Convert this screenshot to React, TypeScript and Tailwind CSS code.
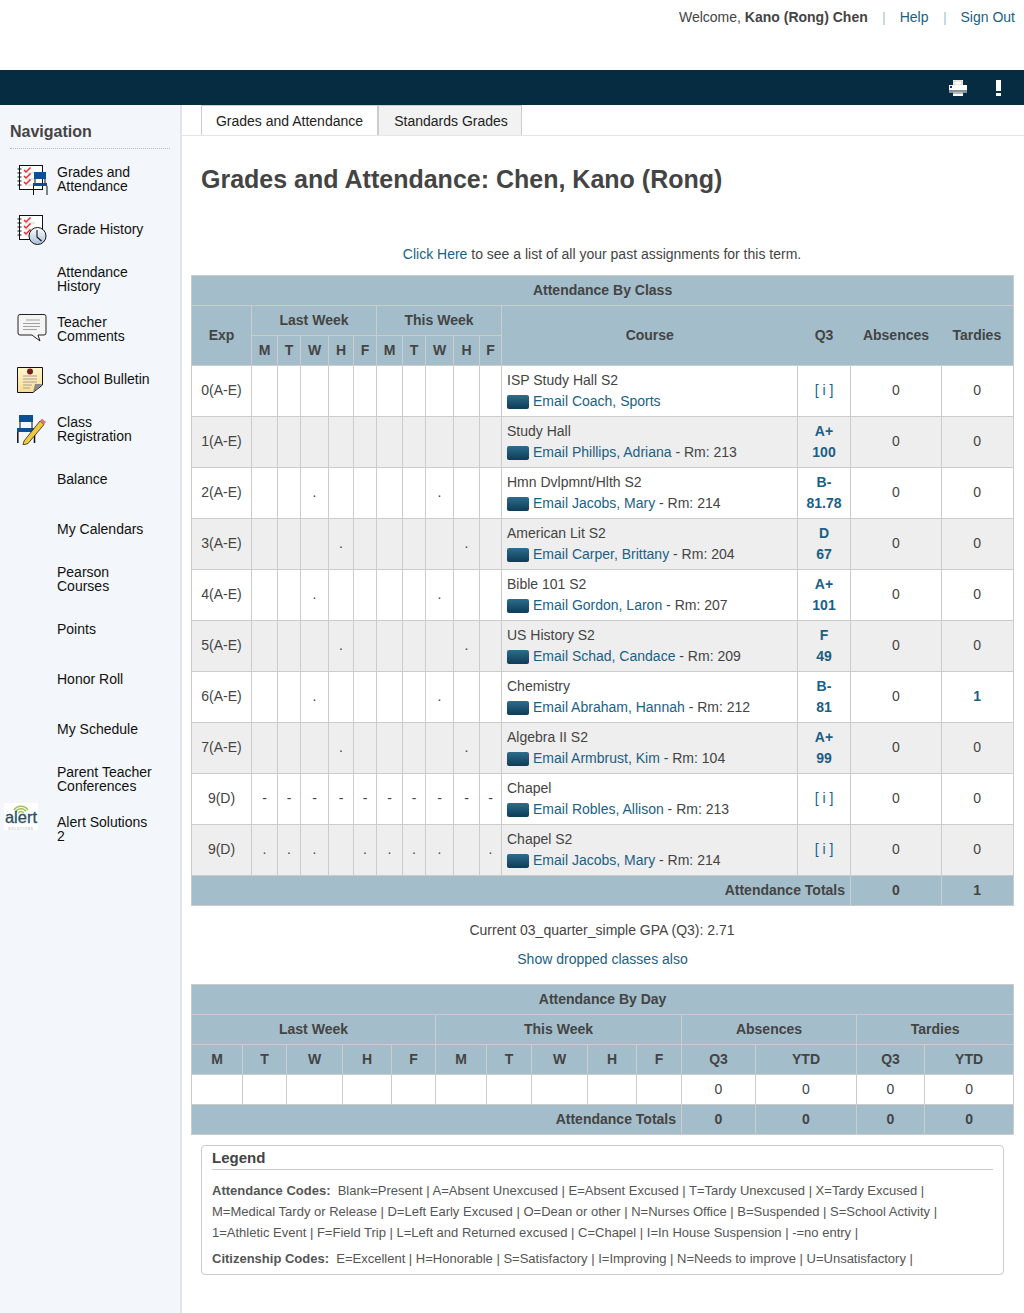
import React from "react";

const Notebook = ({ children }: { children?: React.ReactNode }) => (
  <svg width="32" height="33" viewBox="0 0 32 33" className="block">
    <rect x="2.500" y="2.500" width="23" height="24" fill="#fff" stroke="#111" />
    {[6, 10, 14, 18, 22].map((y) => (
      <path key={y} d={`M0.500 ${y}H4.500`} stroke="#111" />
    ))}
    {[6, 12, 18].map((y) => (
      <g key={y}>
        <path d={`M7 ${y + 1}l2 2 4.500-4.500`} fill="none" stroke="#ea2a2a" strokeWidth="1.500" />
        <path d={`M8 ${y + 4}h10`} stroke="#bbb" strokeWidth="0.700" />
      </g>
    ))}
    {children}
  </svg>
);

const IconGrades = () => (
  <Notebook>
    <rect x="17" y="9" width="12" height="7" fill="#0d4f97" />
    <rect x="16" y="20" width="14" height="3" fill="#0d4f97" />
    <path d="M16.500 23v9M30 23v9M18 16v4M28 16v4" stroke="#111" fill="none" />
  </Notebook>
);
const IconHistory = () => (
  <Notebook>
    <defs>
      <linearGradient id="clk" x1="0" x2="0" y1="0" y2="1">
        <stop offset="0" stopColor="#fff" />
        <stop offset="1" stopColor="#a8c0d8" />
      </linearGradient>
    </defs>
    <circle cx="20.500" cy="23" r="8.500" fill="url(#clk)" stroke="#111" />
    <path d="M20 17v7l4.500 4" fill="none" stroke="#111" strokeWidth="1.100" />
  </Notebook>
);
const IconComments = () => (
  <svg width="32" height="32" viewBox="0 0 32 32" className="block">
    <path d="M3 1.500H27a2 2 0 0 1 2 2V20a2 2 0 0 1-2 2H21l2 6-8-6H3a2 2 0 0 1-2-2V3.500a2 2 0 0 1 2-2Z" fill="#f4f4f4" stroke="#222" />
    <path d="M9 7h14M6 10.500h17M6 13.500h17M6 16.500h14" stroke="#999" strokeWidth="0.900" />
  </svg>
);
const IconBulletin = () => (
  <svg width="32" height="32" viewBox="0 0 32 32" className="block">
    <defs>
      <linearGradient id="pp" x1="0" x2="0" y1="0" y2="1">
        <stop offset="0" stopColor="#fff6cf" />
        <stop offset="1" stopColor="#fbdc8e" />
      </linearGradient>
    </defs>
    <g transform="translate(0,1)">
      <path d="M0.500 3.500H25.500V21L16 28.500H0.500Z" fill="url(#pp)" stroke="#111" />
      <path d="M16 28.500L18 20H25.500Z" fill="#888" />
      <path d="M6 12h14M6 15h14M6 18h14M6 21h9M6 24h7" stroke="#999" strokeWidth="0.900" />
      <circle cx="13" cy="7.500" r="3" fill="#7a1a1a" />
    </g>
  </svg>
);
const IconRegistration = () => (
  <svg width="32" height="32" viewBox="0 0 32 32" className="block">
    <g transform="translate(0,2)">
      <rect x="2" y="0" width="14" height="7" fill="#0d4f97" />
      <rect x="0" y="13" width="18" height="4" fill="#0d4f97" />
      <path d="M3 7v6M15 7v6" stroke="#111" />
      <path d="M0.800 17v11M17.500 17v11" stroke="#111" strokeWidth="1.500" />
      <path d="M7 26l16-20 4 3.500-16 19-5 1.500Z" fill="#f2c83c" stroke="#222" strokeWidth="0.800" />
      <path d="M23 6l2-2.500 4 3.500-2 2.500Z" fill="#d9777a" />
    </g>
  </svg>
);
const IconAlert = () => (
  <svg width="34" height="27" viewBox="0 0 34 27" className="block">
    <rect width="34" height="27" fill="#fff" />
    <g fill="none" stroke="#a3bf58" strokeWidth="1.400">
      <path d="M10 7a8.500 8.500 0 0 1 14 0" />
      <path d="M12 8.500a6 6 0 0 1 10 0" />
      <path d="M14.300 10a3.200 3.200 0 0 1 5.400 0" />
    </g>
    <text x="17" y="19.500" textAnchor="middle" fontSize="16.500" stroke="#2c4f63" strokeWidth="0.300" fill="#2c4f63" fontFamily="'Liberation Sans', sans-serif">alert</text>
    <text x="17" y="26.500" textAnchor="middle" fontSize="3" letterSpacing="0.900" fill="#9aa6ad" fontFamily="'Liberation Sans', sans-serif">SOLUTIONS</text>
  </svg>
);
const IconPrinter = () => (
  <svg width="18" height="16" viewBox="0 0 18 16" className="block">
    <rect x="4" y="0" width="10" height="6" fill="#fff" />
    <rect x="5" y="1" width="8" height="4" fill="#fff" stroke="#aaa" strokeWidth="0.600" />
    <path d="M0 5h18v6H0Z" fill="#fff" />
    <rect x="1" y="6" width="2" height="2" fill="#1a1aff" />
    <rect x="0" y="10.500" width="18" height="1" fill="#052c40" />
    <rect x="0" y="11.500" width="18" height="1" fill="#fff" />
    <rect x="4" y="12" width="10" height="2" fill="#bbb" />
    <rect x="4" y="14" width="10" height="2" fill="#fff" />
  </svg>
);
const IconBang = () => (
  <svg width="5" height="16" viewBox="0 0 5 16" className="block">
    <rect x="0" y="0" width="5" height="11" fill="#fff" />
    <rect x="0" y="13" width="5" height="3" fill="#fff" />
  </svg>
);

const nav: [string[], React.ReactNode][] = [
  [["Grades and", "Attendance"], <IconGrades />],
  [["Grade History"], <IconHistory />],
  [["Attendance", "History"], null],
  [["Teacher", "Comments"], <IconComments />],
  [["School Bulletin"], <IconBulletin />],
  [["Class", "Registration"], <IconRegistration />],
  [["Balance"], null],
  [["My Calendars"], null],
  [["Pearson", "Courses"], null],
  [["Points"], null],
  [["Honor Roll"], null],
  [["My Schedule"], null],
  [["Parent Teacher", "Conferences"], null],
  [["Alert Solutions", "2"], null],
];

const th = "border border-[#cccccc] bg-[#a3bdca] text-[#444444] font-bold text-center p-0";
const td = "border border-[#cccccc] text-center p-0";
const days = ["M", "T", "W", "H", "F", "M", "T", "W", "H", "F"];

type Row = { exp: string; marks: string; course: string; teacher: string; room?: string; grade: string[]; tardies?: string };
const rows: Row[] = [
  { exp: "0(A-E)", marks: "          ", course: "ISP Study Hall S2", teacher: "Email Coach, Sports", grade: ["[ i ]"] },
  { exp: "1(A-E)", marks: "          ", course: "Study Hall", teacher: "Email Phillips, Adriana", room: "213", grade: ["A+", "100"] },
  { exp: "2(A-E)", marks: "  .    .  ", course: "Hmn Dvlpmnt/Hlth S2", teacher: "Email Jacobs, Mary", room: "214", grade: ["B-", "81.78"] },
  { exp: "3(A-E)", marks: "   .    . ", course: "American Lit S2", teacher: "Email Carper, Brittany", room: "204", grade: ["D", "67"] },
  { exp: "4(A-E)", marks: "  .    .  ", course: "Bible 101 S2", teacher: "Email Gordon, Laron", room: "207", grade: ["A+", "101"] },
  { exp: "5(A-E)", marks: "   .    . ", course: "US History S2", teacher: "Email Schad, Candace", room: "209", grade: ["F", "49"] },
  { exp: "6(A-E)", marks: "  .    .  ", course: "Chemistry", teacher: "Email Abraham, Hannah", room: "212", grade: ["B-", "81"], tardies: "1" },
  { exp: "7(A-E)", marks: "   .    . ", course: "Algebra II S2", teacher: "Email Armbrust, Kim", room: "104", grade: ["A+", "99"] },
  { exp: "9(D)", marks: "----------", course: "Chapel", teacher: "Email Robles, Allison", room: "213", grade: ["[ i ]"] },
  { exp: "9(D)", marks: "... .... .", course: "Chapel S2", teacher: "Email Jacobs, Mary", room: "214", grade: ["[ i ]"] },
];

const Mail = () => (
  <span className="inline-block align-[-3px] w-[22px] h-[14px] rounded-[2px] mr-[4px] bg-gradient-to-b from-[#2d6d8e] to-[#0d3c56]" />
);

export default function App() {
  return (
    <div className="min-h-[1313px] bg-white font-['Liberation_Sans',Arial,sans-serif] text-[14px] text-[#444444] flex flex-col">
      <header className="h-[70px] flex justify-end items-start pt-[9px] pr-[9px]">
        <span className="leading-[17px]">Welcome, <b>Kano (Rong) Chen</b></span>
        <span className="ml-[15px] mt-[3px] w-[2px] h-[13px] bg-[#c8d8e4]" />
        <a className="ml-[15px] leading-[17px] text-[#1a5f85]">Help</a>
        <span className="ml-[15px] mt-[3px] w-[2px] h-[13px] bg-[#c8d8e4]" />
        <a className="ml-[15px] leading-[17px] text-[#1a5f85]">Sign Out</a>
      </header>
      <div className="h-[35px] bg-[#052c40] flex items-center justify-end pr-[23px]">
        <IconPrinter />
        <span className="ml-[29px]"><IconBang /></span>
      </div>
      <div className="flex flex-1">
        <aside className="w-[182px] shrink-0 bg-[#f3f6fa] border-r-2 border-[#e2e6ec]">
          <div className="mx-[10px] mt-[17px] pb-[8px] h-[27px] border-b border-dotted border-[#bbbbbb] font-bold text-[16px] leading-[19px] text-[#444444]">Navigation</div>
          <nav className="mt-[5px] text-[#111111] leading-[14px]">
            {nav.map(([lines, icon], i) => (
              <div key={i} className="h-[50px] flex items-center pl-[17px]">
                <div className="w-[40px] shrink-0 relative">
                  {icon}
                  {i === 13 && <div className="absolute left-[-13px] top-[-26px]"><IconAlert /></div>}
                </div>
                <div>
                  {lines.map((l) => <div key={l}>{l}</div>)}
                </div>
              </div>
            ))}
          </nav>
        </aside>
        <main className="flex-1 min-w-0">
          <div className="h-[31px] flex items-end pl-[19px] border-b border-[#e5e5e5]">
            <div className="h-[30px] w-[178px] bg-white border border-b-0 border-r-2 border-[#cccccc] text-center leading-[30px] text-[#222222]">Grades and Attendance</div>
            <div className="h-[30px] w-[143px] pl-[2px] bg-[#f2f2f2] border border-l-0 border-b-0 border-[#cccccc] text-center leading-[30px] text-[#222222]">Standards Grades</div>
          </div>
          <h1 className="ml-[19px] mt-[28px] font-bold text-[25px] leading-[30px] text-[#444444]">Grades and Attendance: Chen, Kano (Rong)</h1>
          <p className="mt-[52px] text-center leading-[17px] pr-[2px]"><a className="text-[#1a5f85]">Click Here</a> to see a list of all your past assignments for this term.</p>
          <div className="ml-[9px] mr-[10px] mt-[12px]">
            <table className="table-fixed w-[822px] border-collapse">
              <colgroup>
                <col className="w-[60px]" />
                <col className="w-[26px]" /><col className="w-[23px]" /><col className="w-[28px]" /><col className="w-[25px]" /><col className="w-[23px]" />
                <col className="w-[26px]" /><col className="w-[23px]" /><col className="w-[28px]" /><col className="w-[26px]" /><col className="w-[22px]" />
                <col className="w-[296px]" /><col className="w-[53px]" /><col className="w-[91px]" /><col className="w-[72px]" />
              </colgroup>
              <thead>
                <tr className="h-[30px]"><th colSpan={15} className={th}>Attendance By Class</th></tr>
                <tr className="h-[30px]">
                  <th rowSpan={2} className={th}>Exp</th>
                  <th colSpan={5} className={th}>Last Week</th>
                  <th colSpan={5} className={th}>This Week</th>
                  <th rowSpan={2} className={`${th} border-r-0`}>Course</th>
                  <th rowSpan={2} className={`${th} border-x-0`}>Q3</th>
                  <th rowSpan={2} className={`${th} border-x-0`}>Absences</th>
                  <th rowSpan={2} className={`${th} border-l-0 pr-[1px]`}>Tardies</th>
                </tr>
                <tr className="h-[30px]">{days.map((d, i) => <th key={i} className={th}>{d}</th>)}</tr>
              </thead>
              <tbody>
                {rows.map((r, i) => (
                  <tr key={i} className={`h-[51px] ${i % 2 ? "bg-[#eeeeee]" : "bg-white"}`}>
                    <td className={`${td} pb-[2px]`}>{r.exp}</td>
                    {r.marks.split("").map((m, j) => <td key={j} className={`${td} pb-[2px]`}>{m.trim()}</td>)}
                    <td className={`${td} text-left pl-[5px] leading-[21px]`}>
                      <div>{r.course}</div>
                      <div className="whitespace-nowrap"><Mail /><a className="text-[#1a5f85]">{r.teacher}</a>{r.room && ` - Rm: ${r.room}`}</div>
                    </td>
                    <td className={`${td} font-bold text-[#1a5f85] leading-[21px] ${r.grade.length === 1 ? "pb-[2px]" : ""}`}>
                      {r.grade.map((g) => <div key={g} className={g === "[ i ]" ? "font-normal" : ""}>{g}</div>)}
                    </td>
                    <td className={`${td} pb-[2px]`}>0</td>
                    <td className={`${td} pb-[2px] pr-[1px] ${r.tardies ? "font-bold text-[#1a5f85]" : ""}`}>{r.tardies ?? "0"}</td>
                  </tr>
                ))}
                <tr className="h-[30px]">
                  <td colSpan={13} className={`${th} text-right pr-[5px]`}>Attendance Totals</td>
                  <td className={th}>0</td>
                  <td className={`${th} pr-[1px]`}>1</td>
                </tr>
              </tbody>
            </table>
            <p className="mt-[16px] text-center leading-[17px] pr-[1px]">Current 03_quarter_simple GPA (Q3): 2.71</p>
            <p className="mt-[12px] text-center leading-[17px] text-[#1a5f85]">Show dropped classes also</p>
            <table className="table-fixed w-[822px] border-collapse mt-[16px]">
              <colgroup>
                <col className="w-[51px]" /><col className="w-[44px]" /><col className="w-[56px]" /><col className="w-[49px]" /><col className="w-[44px]" />
                <col className="w-[51px]" /><col className="w-[45px]" /><col className="w-[56px]" /><col className="w-[49px]" /><col className="w-[45px]" />
                <col className="w-[74px]" /><col className="w-[101px]" /><col className="w-[68px]" /><col className="w-[89px]" />
              </colgroup>
              <thead>
                <tr className="h-[30px]"><th colSpan={14} className={th}>Attendance By Day</th></tr>
                <tr className="h-[30px]">
                  <th colSpan={5} className={th}>Last Week</th>
                  <th colSpan={5} className={th}>This Week</th>
                  <th colSpan={2} className={th}>Absences</th>
                  <th colSpan={2} className={th}>Tardies</th>
                </tr>
                <tr className="h-[30px]">
                  {days.map((d, i) => <th key={i} className={th}>{d}</th>)}
                  {["Q3", "YTD", "Q3", "YTD"].map((d, i) => <th key={i} className={th}>{d}</th>)}
                </tr>
              </thead>
              <tbody>
                <tr className="h-[30px]">
                  {days.map((_, i) => <td key={i} className={td} />)}
                  {[0, 1, 2, 3].map((i) => <td key={i} className={td}>0</td>)}
                </tr>
                <tr className="h-[30px]">
                  <td colSpan={10} className={`${th} text-right pr-[5px]`}>Attendance Totals</td>
                  {[0, 1, 2, 3].map((i) => <td key={i} className={th}>0</td>)}
                </tr>
              </tbody>
            </table>
          </div>
          <section className="ml-[19px] mr-[20px] mt-[10px] h-[130px] border border-[#cccccc] rounded-[4px] px-[10px] text-[#555555] text-[13px]">
            <h2 className="h-[24px] border-b border-[#cccccc] font-bold text-[15px] leading-[23px] text-[#444444]">Legend</h2>
            <p className="mt-[10px] leading-[21px] whitespace-nowrap">
              <b>Attendance Codes:</b>&nbsp; Blank=Present | A=Absent Unexcused | E=Absent Excused | T=Tardy Unexcused | X=Tardy Excused |<br />
              M=Medical Tardy or Release | D=Left Early Excused | O=Dean or other | N=Nurses Office | B=Suspended | S=School Activity |<br />
              1=Athletic Event | F=Field Trip | L=Left and Returned excused | C=Chapel | I=In House Suspension | -=no entry |
            </p>
            <p className="mt-[5px] leading-[21px] whitespace-nowrap">
              <b>Citizenship Codes:</b>&nbsp; E=Excellent | H=Honorable | S=Satisfactory | I=Improving | N=Needs to improve | U=Unsatisfactory |
            </p>
          </section>
        </main>
      </div>
    </div>
  );
}
